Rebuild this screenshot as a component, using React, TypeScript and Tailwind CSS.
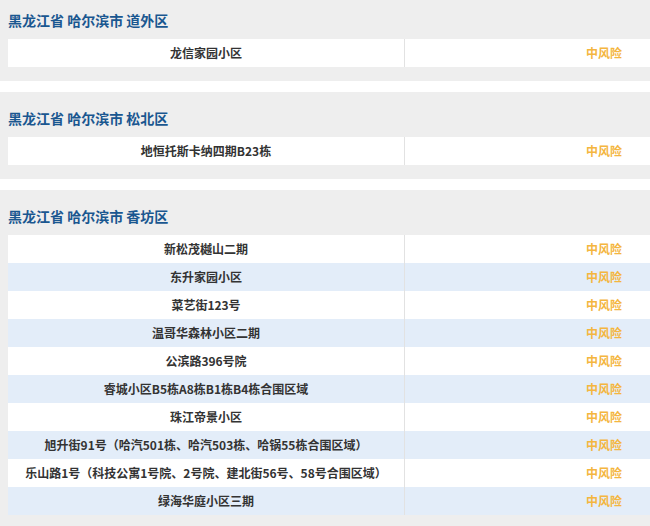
const sections = [
  { title: "黑龙江省 哈尔滨市 道外区", rows: ["龙信家园小区"], first: true },
  { title: "黑龙江省 哈尔滨市 松北区", rows: ["地恒托斯卡纳四期B23栋"] },
  {
    title: "黑龙江省 哈尔滨市 香坊区",
    rows: [
      "新松茂樾山二期",
      "东升家园小区",
      "菜艺街123号",
      "温哥华森林小区二期",
      "公滨路396号院",
      "睿城小区B5栋A8栋B1栋B4栋合围区域",
      "珠江帝景小区",
      "旭升街91号（哈汽501栋、哈汽503栋、哈锅55栋合围区域）",
      "乐山路1号（科技公寓1号院、2号院、建北街56号、58号合围区域）",
      "绿海华庭小区三期",
    ],
  },
];

export default function App() {
  return (
    <div className="w-[650px] h-[526px] overflow-hidden bg-white flex flex-col gap-[11px]" style={{ fontFamily: '"Noto Sans CJK SC", "Noto Sans", sans-serif' }}>
      {sections.map((s) => (
        <div key={s.title} className={`bg-[#eeeeee] pl-2 pb-[14px] shrink-0 ${s.first ? "pt-[10px] -mt-[6px] pt-[16px]" : "pt-[16px]"}`}>
          <div className="h-5 leading-5 text-[14px] font-bold text-[#1a5790] mb-[9px]">{s.title}</div>
          <div className="w-[795px]">
            {s.rows.map((r, i) => (
              <div key={r} className={`flex h-[28px] items-center text-[12px] font-bold ${i % 2 ? "bg-[#e3edf9]" : "bg-white"}`}>
                <div className="w-[397px] text-center text-[#333333] border-r border-[#e2e2e2] h-full leading-[28px]">{r}</div>
                <div className="flex-1 text-center text-[#f4b63f] leading-[28px]">中风险</div>
              </div>
            ))}
          </div>
        </div>
      ))}
    </div>
  );
}
